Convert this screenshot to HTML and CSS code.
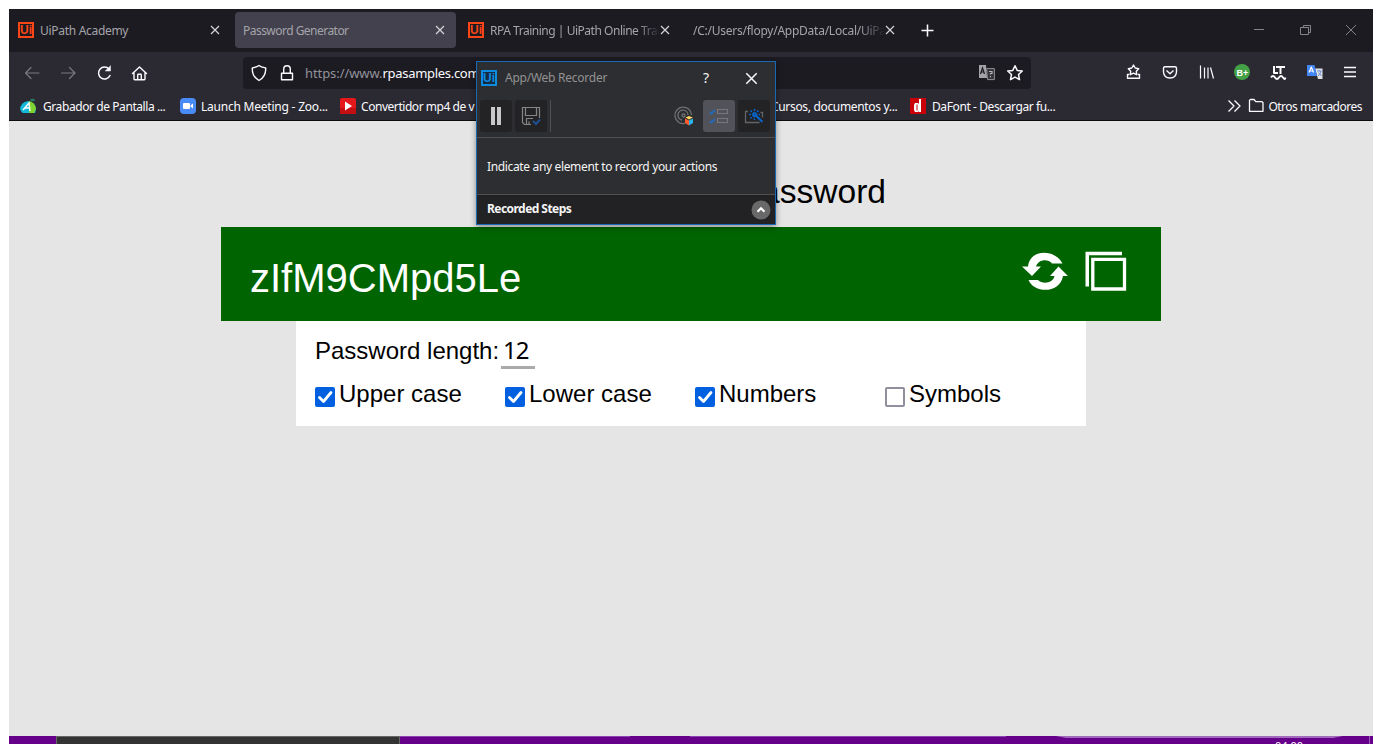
FILE: index.html
```
<!DOCTYPE html>
<html lang="es">
<head>
<meta charset="utf-8">
<title>Password Generator</title>
<link rel="stylesheet" href="styles.css">
</head>
<body>
<svg class="defs" width="0" height="0">
  <symbol id="x" viewBox="0 0 10 10"><path d="M1 1l8 8M9 1L1 9" stroke="currentColor" stroke-width="1.2" fill="none"/></symbol>
</svg>
<div class="window">
  <header class="tabs">
    <div class="tab"><span class="ui">Ui</span><span class="label t1">UiPath Academy</span><svg class="close"><use href="#x"/></svg></div>
    <div class="tab active"><span class="label t2">Password Generator</span><svg class="close"><use href="#x"/></svg></div>
    <div class="tab"><span class="ui">Ui</span><span class="label fade t3">RPA Training | UiPath Online Trai</span><svg class="close"><use href="#x"/></svg></div>
    <div class="tab"><span class="label fade t4">/C:/Users/flopy/AppData/Local/UiPa</span><svg class="close"><use href="#x"/></svg></div>
    <svg class="plus" width="13" height="13" viewBox="0 0 13 13"><path d="M6.5 .5v12M.5 6.5h12" stroke="#fbfbfe" stroke-width="1.5"/></svg>
    <svg class="controls" width="104" height="14" viewBox="0 0 104 14" fill="none" stroke="#85848b"><path d="M1 6.500h10M50.500 4.500v-2h7v7h-2M47.500 4.500h8v7h-8zM93 2l10 10M103 2L93 12"/></svg>
  </header>
  <nav class="toolbar">
    <svg class="nav-icons" width="126" height="18" viewBox="0 0 126 18" fill="none" stroke-linecap="round" stroke-linejoin="round">
      <g stroke="#79787f" stroke-width="1.2"><path d="M15 9H1.500M7 3.500L1.500 9 7 14.500M37.500 9H51M45.500 3.500L51 9l-5.500 5.500"/></g>
      <g stroke="#fbfbfe" stroke-width="1.5"><path d="M86 11.500a6 6 0 1 1-1-6.500"/><path d="M86.500 2v5h-5z" fill="#fbfbfe" stroke-width=".5"/><path d="M108.500 9.500L115.500 3l7 6.500M110 8.500V15q0 .7.700.7h9.600q.7 0 .7-.7V8.500M113.700 15.500v-4.500q0-.7.700-.7h2.200q.7 0 .7.700v4.500" stroke-width="1.4"/></g>
    </svg>
    <div class="urlbar">
      <svg class="lock-icons" width="44" height="18" viewBox="0 0 44 18" fill="none" stroke="#fbfbfe" stroke-width="1.4" stroke-linejoin="round"><path d="M8 1.500C6 3 3.500 3.500 1.300 4 1 10 3.500 14 8 16.500 12.500 14 15 10 14.700 4 12.500 3.500 10 3 8 1.500zM30.500 9.200h11v6.500h-11zM32.700 9V5a3.300 3.300 0 0 1 6.600 0v4"/></svg>
      <span class="url">https://www.<b>rpasamples.com</b></span>
      <svg class="url-icons" width="46" height="18" viewBox="0 0 46 18">
        <path d="M1 1h7l1 13H1z" fill="#a4a4a8"/><path d="M2.500 10L4.500 4l2 6M3.200 8h2.600" fill="none" stroke="#1c1b22" stroke-width="1.200"/><path d="M8.600 4.600h7.800v11H9.500z" fill="#333238" stroke="#919197"/><path d="M11 7.500h3v2h-1.500v1M12.500 12v1.200" fill="none" stroke="#b5b5ba" stroke-width="1.200"/>
        <path d="M37 1.700l2.200 4.700 5.100.6-3.800 3.500 1 5.100-4.500-2.500-4.500 2.500 1-5.100-3.800-3.500 5.100-.6z" fill="none" stroke="#fbfbfe" stroke-width="1.500" stroke-linejoin="round"/>
      </svg>
    </div>
    <svg class="extensions" width="232" height="20" viewBox="0 0 232 20" fill="none" stroke="#fbfbfe" stroke-width="1.400" stroke-linejoin="round">
      <path d="M7.500 2l1.700 3 3.500.700-2.400 2.500.4 3.500-3.200-1.500-3.200 1.500.4-3.500L2.300 5.700l3.500-.7zM3.200 11.500H1.500v3.800h12v-3.800h-1.700"/>
      <path d="M39 3.700h10q1.500 0 1.500 1.500V9q-.5 6-6.500 6t-6.500-6V5.200q0-1.500 1.500-1.500zM40.500 7.500L44 10.700l3.500-3.200"/>
      <path d="M74.500 2.500v13M78.500 4.500v11M82 4.500v11M84.500 4.500l3 11" stroke-width="1.200"/>
      <circle cx="116" cy="9" r="8" fill="#43a047" stroke="none"/><text x="110.500" y="12.500" class="bt">B+</text>
      <path d="M148 3v7h4M150 4h9M154.500 4v7" stroke-width="2"/><path d="M145 14.500q2-3 4 0t4 0 4 0 2.500 0" stroke-width="1.800"/>
      <path d="M189 5.500h7.500v10.500H192z" fill="#dfe1e5" stroke="none"/><path d="M191 8h4.500M193.300 7v1M195 8q-.5 3-3 5M192.500 9.500l3 3.500" stroke="#6e91d9" stroke-width="1"/><path d="M181 2h7.500l2.500 11h-10z" fill="#4385f5" stroke="none"/><path d="M183 9.500l2.300-5.500 2.300 5.500M183.700 8h3.200" stroke-width="1.200"/>
      <path d="M218 4.500h12M218 9h12M218 13.500h12"/>
    </svg>
  </nav>
  <div class="bookmarks">
    <div class="bm"><svg width="16" height="16" viewBox="0 0 16 16"><path d="M8 3Q1 4 0 11q1 3 3 4h12q2-6-1-9z" fill="#12b9d8"/><path d="M9 3q6 1 7 8l-2 4H9z" fill="#7fd32f"/><path d="M10 2l4-1M11 3l4-1" stroke="#268b69"/><path d="M3 12L9 5l1 8M5 10h5" stroke="#fff" stroke-width="1.500" fill="none"/></svg><span class="b1">Grabador de Pantalla ...</span></div>
    <div class="bm"><svg width="16" height="16" viewBox="0 0 16 16"><rect width="16" height="16" rx="4" fill="#4a8cf7"/><rect x="3" y="5" width="7" height="6" rx="1" fill="#fff"/><path d="M10.500 7.500L13 5.500v5l-2.500-2z" fill="#fff"/></svg><span class="b2">Launch Meeting - Zoo...</span></div>
    <div class="bm long"><svg width="16" height="16" viewBox="0 0 16 16"><rect width="16" height="16" rx="2" fill="#e5171b"/><path d="M0 10h16v6H0z" fill="#c30f13"/><path d="M5 3.500v9L12 8z" fill="#fff"/></svg><span class="b3">Convertidor mp4 de v</span></div>
    <div class="bm cursos"><span class="b4">Cursos, documentos y...</span></div>
    <div class="bm dafont"><svg width="16" height="16" viewBox="0 0 16 16"><path d="M0 0h16v16H0z" fill="#c90007"/><path d="M9 1h2v13H9v-1l-1 1H5l-1-2V7l1-2h3l1 1z" fill="#fff"/><path d="M6.500 6.500h1v6h-1z" fill="#c90007"/></svg><span class="b5">DaFont - Descargar fu...</span></div>
    <div class="more"><svg width="37" height="16" viewBox="0 0 37 16" fill="none" stroke="#fbfbfe" stroke-width="1.300"><path d="M1.500 2.500L7 8l-5.500 5.500M7.500 2.500L13 8l-5.500 5.500M22.500 13.300v-11l1-.8h3.500l1.800 2.200H35l1 1v8.600z" stroke-linejoin="round"/></svg><span class="b6">Otros marcadores</span></div>
  </div>
  <main class="page">
    <h1>Generate a new password</h1>
    <section class="result">
      <output>zIfM9CMpd5Le</output>
      <svg width="106" height="42" viewBox="0 0 106 42" fill="#fff">
        <path d="M40.500 12.500C33-2 8-2.500 6 15.500H0L10 25l9-9.500h-5C16.500 8 26 7.500 30 12.500z"/>
        <path d="M6.500 29C12 42.500 38 43 41 25h5l-9.500-9.500L28 25h4.500C31 32.500 20.500 33.500 16 29z"/>
        <path d="M63.500 .8H100V4.300H67V35.500h-3.500z"/><path d="M70.800 8.300h31.700v29.700h-31.700z" fill="none" stroke="#fff" stroke-width="3.300"/>
      </svg>
    </section>
    <section class="options">
      <div class="length"><span>Password length:</span><span class="number">12</span></div>
      <div class="checks">
        <label><svg class="check on" viewBox="0 0 20 20"><path d="M4.500 10.500l4 4 7.500-9"/></svg>Upper case</label>
        <label><svg class="check on" viewBox="0 0 20 20"><path d="M4.500 10.500l4 4 7.500-9"/></svg>Lower case</label>
        <label><svg class="check on" viewBox="0 0 20 20"><path d="M4.500 10.500l4 4 7.500-9"/></svg>Numbers</label>
        <label><svg class="check off" viewBox="0 0 20 20"></svg>Symbols</label>
      </div>
    </section>
  </main>
  <footer class="taskbar">
    <div class="task"></div>
    <svg width="973" height="8" viewBox="0 0 973 8"><path d="M0 .5h230M290 .5h316" stroke="#8e43b3"/><path d="M656 0h287l-10 2h-267z" fill="#a16abd"/><path d="M969.500 0v8" stroke="#9e5bbe"/></svg>
    <span class="clock">04:00</span>
  </footer>
</div>
<aside class="recorder">
  <div class="rec-title"><span class="ui blue">Ui</span><span class="rec-name">App/Web Recorder</span><span class="help">?</span><svg class="rec-close"><use href="#x"/></svg></div>
  <div class="rec-tools">
    <div class="tool"><svg width="32" height="32" viewBox="0 0 32 32"><path d="M11 7h4v18h-4zM17 7h4v18h-4z" fill="#c8c8c8"/></svg></div>
    <div class="tool"><svg width="32" height="32" viewBox="0 0 32 32" fill="none" stroke="#858585" stroke-width="1.200"><path d="M16 24.500H9.500l-2-2v-15h17V18M10.500 7.500v8h11v-8M11.500 24v-5.500H18M14 24v-2.500"/><path d="M18 21l3 3 4-4.500" stroke="#1e4f91" stroke-width="2"/></svg></div>
    <i class="divider"></i>
    <div class="tool plain"><svg width="32" height="32" viewBox="0 0 32 32" fill="none" stroke="#707174" stroke-width="1.300"><path d="M17 23.500A8.300 8.300 0 1 1 23.500 15M14 20a5 5 0 1 1 6-5"/><circle cx="15.500" cy="15.500" r="1.500"/><path d="M17 18.500l4 2V25.500L17 23z" fill="#ff5a28" stroke="none"/><path d="M21 20.500l4-2V23L21 25.500z" fill="#29b3ec" stroke="none"/><path d="M17.500 17.500l3.500-1.500 3.800 1.500-3.800 2z" fill="#ffd45f" stroke="none"/></svg></div>
    <div class="tool selected"><svg width="32" height="32" viewBox="0 0 32 32" fill="none" stroke="#76777b" stroke-width="1.200"><path d="M14.500 9.500h10v4h-10zM14.500 18.500h10v4h-10z"/><path d="M7 12l1.500 1.500L12 10M7 21l1.500 1.500L12 19" stroke="#206cbb" stroke-width="1.800"/></svg></div>
    <div class="tool"><svg width="32" height="32" viewBox="0 0 32 32" fill="none" stroke="#63656a" stroke-width="1.300"><path d="M10 11.500H7.500v11h14M22.500 12.500h2v5"/><path d="M18 15.500l6.500 6.500" stroke="#0865cb" stroke-width="2"/><path d="M16.500 9v11M11 14.500h11M12.500 10.500l8 8M20.500 10.500l-8 8" stroke="#0865cb" stroke-width="1.600" stroke-dasharray="2 1.200"/></svg></div>
  </div>
  <div class="rec-message"><span>Indicate any element to record your actions</span></div>
  <div class="rec-steps"><b>Recorded Steps</b><svg width="20" height="20" viewBox="0 0 20 20"><circle cx="10" cy="10" r="9.500" fill="#69696a"/><path d="M6.500 11.800L10 8.300l3.500 3.500" fill="none" stroke="#fff" stroke-width="2.200"/></svg></div>
</aside>
</body>
</html>
```
FILE: styles.css
```
* { box-sizing: border-box; }
body { margin: 0; padding: 9px 9px 0; width: 1382px; height: 744px; overflow: hidden; background: #fff; position: relative; font: 12px/16px "Noto Sans", "Open Sans", sans-serif; }
svg { display: block; flex: none; }
.defs { position: absolute; }
.window { width: 1364px; height: 735px; display: flex; flex-direction: column; overflow: hidden; }
.tabs { height: 43px; flex: none; background: #1c1b22; display: flex; align-items: flex-start; gap: 4px; padding: 3px 0 0 1px; color: #a5a4aa; }
.tab { width: 221px; height: 36px; flex: none; display: flex; align-items: center; padding: 0 11px 0 8px; border-radius: 4px; }
.tab.active { background: #42414d; }
.label { white-space: nowrap; overflow: hidden; flex: 1; padding-top: 2px; }
.t1 { letter-spacing: -.3px; }
.t2 { letter-spacing: -.53px; }
.t3 { letter-spacing: -.47px; }
.t4 { letter-spacing: -.25px; }
.fade { -webkit-mask-image: linear-gradient(90deg, #000 87%, transparent 100%); mask-image: linear-gradient(90deg, #000 87%, transparent 100%); }
.close { width: 10px; height: 10px; color: #d5d4d9; }
.ui { width: 16px; height: 16px; flex: none; border: 2px solid #fa4616; color: #fa4616; font: bold 12px/12px "Liberation Sans", sans-serif; text-align: center; margin-right: 6px; }
.ui.blue { color: #0c8ce0; border-color: #0c8ce0; background: #142b42; margin-right: 8px; }
.plus { margin: 12px 0 0 11px; }
.controls { margin: 11px 16px 0 auto; }
.toolbar { height: 41px; flex: none; background: #2b2a33; display: flex; align-items: center; padding: 0 15px; }
.nav-icons { margin-right: 93px; }
.urlbar { width: 788px; height: 32px; border-radius: 4px; background: #1c1b22; display: flex; align-items: center; padding: 0 7px 0 8px; }
.url { margin-left: 10px; color: #93929a; font-size: 13px; letter-spacing: -.08px; }
.url b { font-weight: 400; color: #fbfbfe; letter-spacing: -.3px; }
.url-icons { margin-left: auto; }
.extensions { margin-left: auto; }
.bookmarks { height: 28px; flex: none; background: #2b2a33; border-bottom: 1px solid #0c0c0d; color: #fbfbfe; display: flex; align-items: center; padding: 0 11px 2px; }
.bookmarks span { padding-top: 2px; }
.bm { width: 160px; flex: none; display: flex; align-items: center; gap: 6px; white-space: nowrap; }
.bm.long { width: 431px; }
.bm.cursos { width: 139px; }
.b1 { letter-spacing: -.42px; padding-left: 1px; }
.b2 { letter-spacing: -.22px; margin-left: -1px; }
.b3 { letter-spacing: -.45px; margin-left: -1px; }
.b4 { letter-spacing: -.33px; }
.b5 { letter-spacing: -.4px; }
.b6 { letter-spacing: -.5px; }
.more { margin-left: auto; display: flex; align-items: center; gap: 4px; white-space: nowrap; }
.page { flex: 1; background: #e5e5e5; font-family: "Liberation Sans", Arial, sans-serif; color: #000; }
h1 { margin: 0; padding: 50px 487px 0 0; height: 106px; text-align: right; font-weight: 400; font-size: 33.600px; line-height: 42px; white-space: nowrap; }
.result { width: 940px; height: 94px; margin: 0 auto; background: #006400; display: flex; justify-content: space-between; padding: 24px 33px 0 30px; color: #fff; }
output { font-size: 40px; line-height: 54px; margin-left: -1px; }
.options { width: 790px; height: 105px; margin: 0 auto; background: #fff; padding: 13px 19px; font-size: 24px; line-height: 34px; }
.length { display: flex; height: 43px; }
.number { height: 35px; width: 34px; border-bottom: 3px solid #aaa; margin-left: 2px; padding-left: 2px; font-family: "Noto Sans", sans-serif; font-size: 24px; line-height: 32px; letter-spacing: -1px; }
.checks { display: flex; }
.checks label { width: 190px; flex: none; display: flex; align-items: center; gap: 4px; }
.check { width: 20px; height: 20px; margin-top: 6px; border-radius: 2px; }
.on { background: #0060df; fill: none; stroke: #fff; stroke-width: 2.800px; stroke-linecap: round; stroke-linejoin: round; }
.off { border: 2px solid #8f8f9d; }
.taskbar { height: 8px; flex: none; background: #66008a; display: flex; padding-left: 47px; position: relative; overflow: hidden; }
.task { width: 344px; flex: none; background: #333; border: 1px solid #666; border-bottom: 0; }
.clock { position: absolute; left: 1266px; top: 3px; color: #fff; font-size: 11px; line-height: 14px; }
.recorder { position: absolute; left: 476px; top: 61px; width: 300px; height: 164px; border: 1px solid #1a69b3; background: #2d2e31; color: #f5f5f5; box-shadow: 0 2px 6px #0006; }
.rec-title { height: 32px; display: flex; align-items: center; padding: 0 17px 0 4px; }
.rec-name { color: #929294; letter-spacing: -.25px; }
.help { margin: 0 36px 0 auto; font-size: 14px; }
.rec-close { width: 13px; height: 13px; }
.rec-tools { height: 44px; border-bottom: 1px solid #505052; display: flex; align-items: flex-start; padding: 6px 5px 0 3px; gap: 3px; }
.tool { width: 32px; height: 32px; border-radius: 3px; background: #232325; }
.plain { background: none; margin-left: auto; }
.selected { background: #52525b; }
.divider { width: 1px; height: 32px; background: #515154; }
.rec-message { height: 57px; border-bottom: 1px solid #505052; display: flex; align-items: center; padding: 2px 0 0 10px; white-space: nowrap; letter-spacing: -.35px; }
.rec-steps { height: 29px; background: #222224; display: flex; align-items: center; justify-content: space-between; padding: 0 4px 0 10px; letter-spacing: -.55px; }
.rec-steps b { padding-bottom: 1px; }
.bt { fill: #fff; stroke: none; font: bold 9px "Liberation Sans", sans-serif; }
```
